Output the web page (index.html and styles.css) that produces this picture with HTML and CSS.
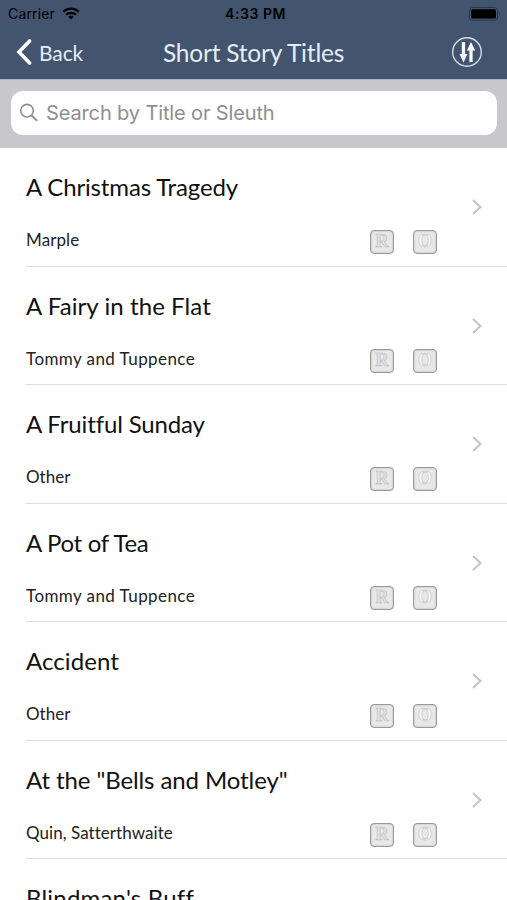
FILE: index.html
```html
<!DOCTYPE html>
<html lang="en">
<head>
<meta charset="utf-8">
<title>Short Story Titles</title>
<link rel="stylesheet" href="styles.css">
</head>
<body>
<svg class="defs" aria-hidden="true">
  <symbol id="chevron" viewBox="0 0 12 18"><path d="M2 2l7.5 7L2 16" fill="none" stroke="#c4c4c7" stroke-width="2"/></symbol>
</svg>
<header class="header">
  <div class="status">
    <span class="carrier">Carrier
      <svg class="wifi" width="18" height="13" viewBox="0 0 18 13"><g fill="none" stroke="#000" stroke-width="2.2"><path d="M1.3 4.8a11 11 0 0 1 15.4 0"/><path d="M4 7.8a7.2 7.2 0 0 1 10 0"/></g><path d="M9 12.6L6.2 9.8a4 4 0 0 1 5.6 0z"/></svg>
    </span>
    <span class="time">4:33 PM</span>
    <svg class="battery" width="32" height="14" viewBox="0 0 32 14"><rect x=".6" y=".6" width="28" height="12.6" rx="3" fill="none" stroke="#263750"/><rect x="2.2" y="2.2" width="24.8" height="9.4" rx="1.5"/><path d="M30 4.8q2 2 0 4.4z" fill="#263750"/></svg>
  </div>
  <nav class="nav">
    <a class="back"><svg width="17" height="28" viewBox="0 0 17 28"><path d="M14.6 3L4 14l10.6 11" fill="none" stroke="#fff" stroke-width="3.6" stroke-linecap="round"/></svg><span>Back</span></a>
    <h1 class="heading">Short Story Titles</h1>
    <svg class="sort" width="32" height="32" viewBox="0 0 32 32"><circle cx="16" cy="16" r="14.3" fill="none" stroke="#d5dfeb" stroke-width="1.4"/><g fill="#fff"><path d="M10.8 6h3.3v12h2.3l-3.9 8.5-4-8.5h2.3z"/><path d="M18.4 26h3.2V14.5h2.6L20 6l-4.1 8.5h2.5z"/></g></svg>
  </nav>
</header>
<div class="searchbar"><div class="field"><svg width="20" height="20" viewBox="0 0 20 20"><g fill="none" stroke="#8e8e93" stroke-width="1.6"><circle cx="8" cy="7.7" r="6.3"/><path d="M12.5 12.3l5.6 5.6" stroke-width="2"/></g></svg><span>Search by Title or Sleuth</span></div></div>
<main class="list">
  <article class="row"><h2 class="t1">A Christmas Tragedy</h2><p class="s1">Marple</p><div class="badges"><b>R</b><b>O</b></div><svg class="chev"><use href="#chevron"/></svg></article>
  <article class="row"><h2 class="t2">A Fairy in the Flat</h2><p class="s2">Tommy and Tuppence</p><div class="badges"><b>R</b><b>O</b></div><svg class="chev"><use href="#chevron"/></svg></article>
  <article class="row"><h2 class="t3">A Fruitful Sunday</h2><p class="s3">Other</p><div class="badges"><b>R</b><b>O</b></div><svg class="chev"><use href="#chevron"/></svg></article>
  <article class="row"><h2 class="t4">A Pot of Tea</h2><p class="s2">Tommy and Tuppence</p><div class="badges"><b>R</b><b>O</b></div><svg class="chev"><use href="#chevron"/></svg></article>
  <article class="row"><h2 class="t5">Accident</h2><p class="s3">Other</p><div class="badges"><b>R</b><b>O</b></div><svg class="chev"><use href="#chevron"/></svg></article>
  <article class="row"><h2 class="t6">At the "Bells and Motley"</h2><p class="s4">Quin, Satterthwaite</p><div class="badges"><b>R</b><b>O</b></div><svg class="chev"><use href="#chevron"/></svg></article>
  <article class="row"><h2 class="t7">Blindman's Buff</h2></article>
</main>
</body>
</html>
```
FILE: styles.css
```css
* { box-sizing: border-box; margin: 0; padding: 0; }
html, body { height: 900px; overflow: hidden; }
body { background: #fff; font-family: Optima, Lato, sans-serif; color: #111; display: flex; flex-direction: column; }
.defs { display: none; }
.header { flex: none; height: 79px; background: #43546f; }
.status { height: 27px; display: grid; grid-template-columns: 1fr auto 1fr; align-items: center; padding: 0 6px 0 8px; font-family: Inter, sans-serif; font-size: 14px; color: #000; }
.carrier { display: flex; align-items: center; gap: 7px; letter-spacing: .15px; }
.time { font-weight: 600; letter-spacing: .55px; padding-left: 2px; }
.battery { justify-self: end; }
.nav { height: 52px; display: grid; grid-template-columns: 1fr auto 1fr; align-items: center; padding: 0 24px 2px 15px; color: #e5edf5; }
.back { display: flex; align-items: center; gap: 7px; font-size: 21px; letter-spacing: -.1px; }
.heading { font-size: 24.5px; font-weight: 400; letter-spacing: -.2px; padding: 1px 0 0 9px; }
.sort { justify-self: end; }
.searchbar { flex: none; height: 69px; background: #c8c8cc; padding: 11px 10px 13px 11px; border-top: 1px solid #a9b1bd; }
.field { height: 44px; background: #fff; border-radius: 12px; display: flex; align-items: center; gap: 7px; padding-left: 8px; color: #8e8e93; font: 20px Inter, sans-serif; letter-spacing: -.13px; }
.list { flex: none; height: 752px; overflow: hidden; }
.row { height: 118.5px; margin-left: 26px; border-bottom: 1.5px solid #dededf; display: grid; grid-template-columns: 344px 102px 1fr; grid-template-rows: 79px 28px; }
.row h2 { font-size: 24px; font-weight: 400; line-height: 78px; white-space: nowrap; grid-area: 1 / 1 / 2 / 3; }
.row p { font-size: 17px; line-height: 26px; grid-area: 2 / 1; color: #222; }
.row .t1 { letter-spacing: -.15px; }
.row .t2 { letter-spacing: .08px; }
.row .t3 { letter-spacing: -.14px; }
.row .t4 { letter-spacing: -.3px; }
.row .t5 { letter-spacing: .07px; }
.row .t6 { letter-spacing: -.1px; }
.row .t7 { letter-spacing: .2px; }
.s1 { letter-spacing: .1px; }
.s2 { letter-spacing: .42px; }
.s4 { letter-spacing: .05px; }
.badges { grid-area: 2 / 2; display: flex; gap: 19px; padding-top: 3px; }
.badges b { width: 24px; height: 24px; border: 1.5px solid #999; border-radius: 4px; background: #e8e8e8; color: #e2e2e2; box-shadow: inset 0 0 2px #aaa; font: bold 18px/21px "Liberation Serif", serif; text-align: center; -webkit-text-stroke: .6px #bdbdbd; }
.badges b + b { color: #fafafa; }
.chev { width: 12px; height: 18px; grid-area: 1 / 3; margin: 50px 0 0 -1px; }
.row:last-child { height: 41px; border: 0; grid-template-rows: 41px; }
```
